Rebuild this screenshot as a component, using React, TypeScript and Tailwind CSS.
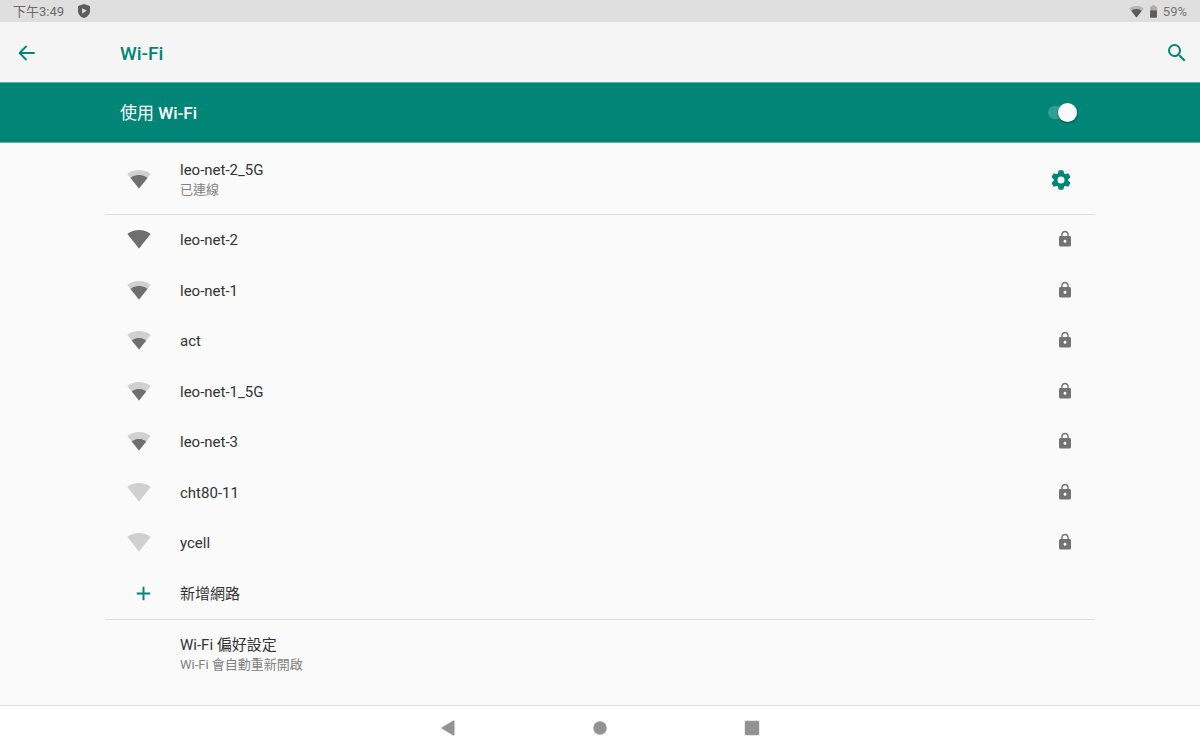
import { useState } from "react";
import { MdAdd, MdLock, MdSearch } from "react-icons/md";

const NETWORKS = [
  { ssid: "leo-net-2", level: 4 },
  { ssid: "leo-net-1", level: 3 },
  { ssid: "act", level: 2 },
  { ssid: "leo-net-1_5G", level: 2 },
  { ssid: "leo-net-3", level: 2 },
  { ssid: "cht80-11", level: 0 },
  { ssid: "ycell", level: 0 },
];

const FULL_FAN =
  "M12.01 21.49L23.64 7c-.45-.34-4.93-4-11.64-4C5.28 3 .81 6.66.36 7l11.63 14.49.01.01.01-.01z";

const FANS: Record<number, string> = {
  2: "M4.79 12.52l7.2 8.98H12l.01-.01 7.2-8.98C18.85 12.24 16.1 10 12 10s-6.85 2.24-7.21 2.52z",
  3: "M3.53 10.95l8.46 10.54.01.01.01-.01 8.46-10.54C20.04 10.62 16.81 8 12 8c-4.81 0-8.04 2.62-8.47 2.95z",
  4: FULL_FAN,
};

const GEAR_TEETH = [0, 60, 120, 180, 240, 300];

function WifiSignal({ level, className }: { level: number; className: string }) {
  return (
    <svg viewBox="0 0 24 24" fill="currentColor" className={className} aria-hidden="true">
      {level < 4 && <path d={FULL_FAN} fillOpacity={0.3} />}
      {level > 0 && <path d={FANS[level]} />}
    </svg>
  );
}

function GearIcon() {
  return (
    <svg viewBox="0 0 24 24" className="size-6" fill="currentColor" aria-hidden="true">
      <circle cx="12" cy="12" r="5.4" fill="none" stroke="currentColor" strokeWidth="3.8" />
      {GEAR_TEETH.map((deg) => (
        <path
          key={deg}
          transform={`rotate(${deg} 12 12)`}
          d="M8.6 7L9.500 3.100Q9.700 2.300 10.500 2.300h3Q14.300 2.300 14.500 3.100L15.400 7Q12 5.800 8.600 7z"
        />
      ))}
    </svg>
  );
}

function StatusBar() {
  return (
    <div className="flex h-[22px] items-center justify-between bg-[#dfdfdf] px-[13px] text-[13px] leading-none text-[#6b6b6b]">
      <div className="flex items-center gap-[14px]">
        <span>下午3:49</span>
        <svg viewBox="0 0 12 14" className="h-[14px] w-3 text-[#5c5c5c]" aria-hidden="true">
          <path
            fill="currentColor"
            fillRule="evenodd"
            d="M6 0l5.2 1.8c.5.2.8.5.8 1V7c0 3.200-2.300 5.900-6 7C2.300 12.900 0 10.200 0 7V2.800c0-.5.3-.8.8-1zM4.100 4.200v5.200L8.800 6.800z"
          />
        </svg>
      </div>
      <div className="flex items-center gap-[2px]">
        <WifiSignal level={3} className="size-[15px] text-[#5c5c5c]" />
        <svg viewBox="0 0 24 24" className="size-[15px] text-[#5c5c5c]" fill="currentColor" aria-hidden="true">
          <path fillOpacity={0.4} d="M17.500 5.330C17.500 4.600 16.900 4 16.170 4H14V2h-4v2H7.830C7.100 4 6.500 4.600 6.500 5.330V10h11z" />
          <path d="M6.500 10v10.670C6.500 21.400 7.100 22 7.830 22h8.340c.73 0 1.330-.6 1.330-1.330V10z" />
        </svg>
        <span className="text-[#757575]">59%</span>
      </div>
    </div>
  );
}

export default function App() {
  const [enabled, setEnabled] = useState(true);

  return (
    <div className="flex min-h-screen flex-col bg-[#fafafa] font-['Roboto','Noto_Sans_CJK_TC',sans-serif] text-[#333333]">
      <StatusBar />

      <header className="flex h-[61px] items-center border-b border-[#5fb0a7] bg-[#f5f5f5] px-[11px] pt-px text-[#008577]">
        <button type="button" aria-label="返回" className="w-[109px] px-1">
          <svg viewBox="0 0 24 24" className="size-6" fill="none" stroke="currentColor" strokeWidth={1.8} strokeLinecap="round" strokeLinejoin="round" aria-hidden="true">
            <path d="M19 12H5M11 5.500L4.600 12l6.400 6.500" />
          </svg>
        </button>
        <h1 className="flex-1 pt-[2px] text-[19px] font-medium leading-6">Wi-Fi</h1>
        <button type="button" aria-label="搜尋">
          <MdSearch className="size-6" />
        </button>
      </header>

      {/* Master switch */}
      <div className="h-[60px] border-b border-[#5fb0a7] bg-[#008577] text-white">
        <label className="mx-auto flex h-full max-w-[990px] cursor-pointer items-center justify-between pr-[18px] pl-[15px] text-[17px] leading-6">
          <span>
            使用 <span className="font-medium">Wi-Fi</span>
          </span>
          <span className="relative flex h-5 w-[29px] items-center">
            <input
              type="checkbox"
              role="switch"
              checked={enabled}
              onChange={(e) => setEnabled(e.target.checked)}
              className="peer h-[13px] w-full cursor-pointer appearance-none rounded-full bg-white/20"
            />
            <span className="pointer-events-none absolute left-0 size-[19px] rounded-full bg-[#fafafa] shadow-[0_1px_2px_rgba(0,0,0,0.4)] peer-checked:right-0 peer-checked:left-auto" />
          </span>
        </label>
      </div>

      <main className="mx-auto flex w-full max-w-[990px] flex-1 flex-col pb-4">
        {/* Connected network */}
        <div className="flex h-[72px] items-center border-b border-[#dedede] pt-[2px] pr-[22px]">
          <button type="button" className="flex flex-1 items-center text-left">
            <span className="w-[75px] pb-[2px] pl-[22px]">
              <WifiSignal level={3} className="size-6 text-[#6f6f6f]" />
            </span>
            <span className="flex flex-col">
              <span className="text-[15px] leading-5">leo-net-2_5G</span>
              <span className="text-[13px] leading-[19px] text-[#828282]">已連線</span>
            </span>
          </button>
          <button type="button" aria-label="網路設定" className="text-[#008577]">
            <GearIcon />
          </button>
        </div>

        <ul className="grid flex-1 auto-rows-fr border-b border-[#dedede] text-[15px] leading-5">
          {NETWORKS.map((n) => (
            <li key={n.ssid} className="flex min-h-[50px]">
              <button type="button" className="flex flex-1 items-center pr-[21px] text-left">
                <span className="w-[75px] pb-[2px] pl-[22px]">
                  <WifiSignal level={n.level} className="size-6 text-[#6f6f6f]" />
                </span>
                <span className="flex-1">{n.ssid}</span>
                <span className="pb-[2px]">
                  <MdLock className="size-[18px] text-[#737373]" />
                </span>
              </button>
            </li>
          ))}
          <li className="flex min-h-[50px]">
            <button type="button" className="flex flex-1 items-center text-left">
              <span className="w-[75px] pl-[27px]">
                <MdAdd className="size-[23px] text-[#008577]" />
              </span>
              新增網路
            </button>
          </li>
        </ul>

        <button type="button" className="flex h-[69px] flex-col justify-center pl-[75px] text-left">
          <span className="text-[15px] leading-5">Wi-Fi 偏好設定</span>
          <span className="text-[13px] leading-[19px] text-[#828282]">Wi-Fi 會自動重新開啟</span>
        </button>
      </main>

      {/* System navigation */}
      <nav className="flex h-[45px] items-center justify-center gap-32 border-t border-[#dadada] bg-white text-[#939393]">
        <button type="button" aria-label="上一頁">
          <svg viewBox="0 0 24 24" className="size-6" fill="currentColor" aria-hidden="true">
            <path d="M18.500 5.200v13.600c0 .7-.6 1-1.200.7L6 12.700c-.6-.4-.6-1 0-1.400l11.300-6.800c.6-.3 1.200 0 1.200.7z" />
          </svg>
        </button>
        <button type="button" aria-label="主畫面">
          <svg viewBox="0 0 24 24" className="size-6" fill="currentColor" aria-hidden="true">
            <circle cx="12" cy="12" r="6.7" />
          </svg>
        </button>
        <button type="button" aria-label="最近使用">
          <svg viewBox="0 0 24 24" className="size-6" fill="currentColor" aria-hidden="true">
            <rect x="4.800" y="4.800" width="14.400" height="14.400" rx="1" />
          </svg>
        </button>
      </nav>
    </div>
  );
}
